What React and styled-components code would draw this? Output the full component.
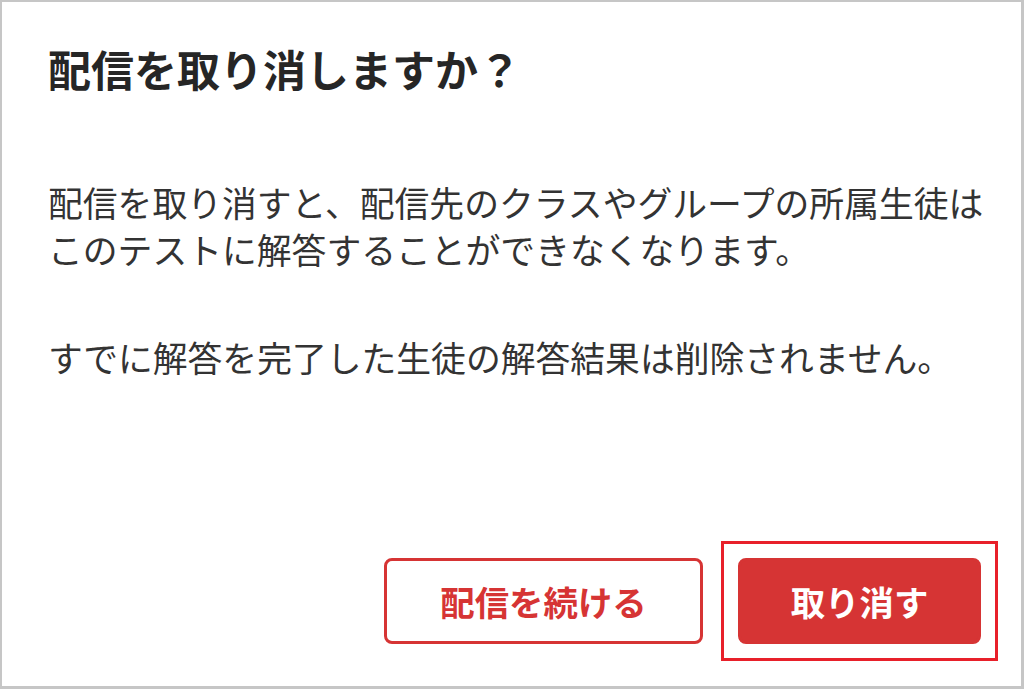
import React from 'react';
import styled, { createGlobalStyle } from 'styled-components';

const GlobalStyle = createGlobalStyle`
  html, body {
    margin: 0;
    padding: 0;
    background: #ffffff;
  }
  body {
    font-family: "Noto Sans CJK JP", "Noto Sans", sans-serif;
  }
`;

const DialogFrame = styled.div`
  box-sizing: border-box;
  width: 1024px;
  height: 689px;
  display: flex;
  flex-direction: column;
  background: #ffffff;
  border-style: solid;
  border-color: #c6c6c6;
  border-width: 2px 3px 3px 2px;
  padding: 36px 30px 42px 46px;
`;

const Title = styled.h2`
  margin: 0;
  font-size: 43px;
  line-height: 60px;
  font-weight: 700;
  color: #262626;
`;

const Body = styled.div`
  margin-top: 81px;
  color: #333333;
  font-size: 34.8px;
  line-height: 47px;
`;

const Paragraph = styled.p`
  margin: 0;
  & + & {
    margin-top: 61px;
  }
`;

const Actions = styled.div`
  margin: auto -7px -17px 0;
  display: flex;
  justify-content: flex-end;
  align-items: center;
  gap: 18px;
`;

/* square keyboard-focus ring drawn around the active button */
const FocusRing = styled.span`
  display: flex;
  padding: 14px;
  border: 3px solid #e8202a;
`;

const Button = styled.button`
  box-sizing: border-box;
  height: 86px;
  width: ${(p) => p.$width}px;
  border-radius: 8px;
  font-family: "Noto Sans CJK JP", sans-serif;
  font-size: 34.4px;
  font-weight: 700;
  cursor: pointer;
  border: 3px solid #d63434;
  background: ${(p) => (p.$primary ? '#d63434' : '#ffffff')};
  color: ${(p) => (p.$primary ? '#ffffff' : '#d63434')};
  outline: none;
  padding: 0;
`;

export default function App() {
  return (
    <>
      <GlobalStyle />
      <DialogFrame>
        <Title>配信を取り消しますか？</Title>
        <Body>
          <Paragraph>
            配信を取り消すと、配信先のクラスやグループの所属生徒はこのテストに解答することができなくなります。
          </Paragraph>
          <Paragraph>すでに解答を完了した生徒の解答結果は削除されません。</Paragraph>
        </Body>
        <Actions>
          <Button $width={319}>配信を続ける</Button>
          <FocusRing>
            <Button $width={243} $primary>
              取り消す
            </Button>
          </FocusRing>
        </Actions>
      </DialogFrame>
    </>
  );
}
